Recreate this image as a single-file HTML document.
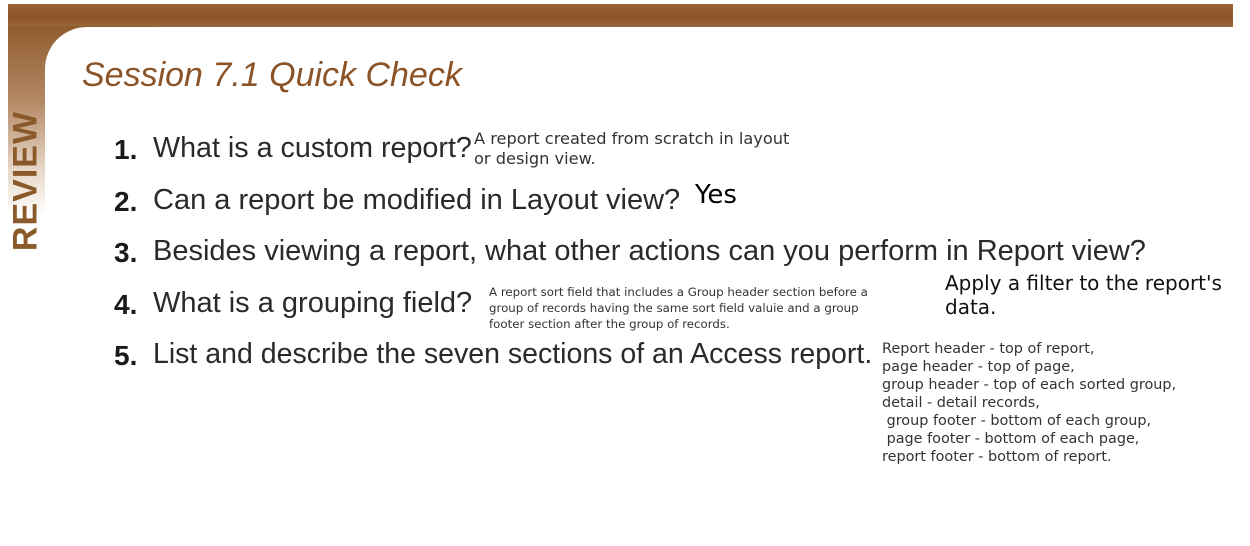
<!DOCTYPE html>
<html><head><meta charset="utf-8"><style>
html,body{margin:0;padding:0;background:#fff;}
body{width:1250px;height:546px;position:relative;overflow:hidden;font-family:"Liberation Sans",sans-serif;}
.band{position:absolute;left:8px;top:4px;width:1225px;height:23px;background:linear-gradient(#9a6434,#8a5428 60%,#9c6a3e);}
.side{position:absolute;left:8px;top:26px;width:150px;height:190px;background:linear-gradient(#915c2e,#b48a66 40%,#e6d6c6 75%,#fff);}
.corner{position:absolute;left:45px;top:27px;width:200px;height:200px;background:#fff;border-top-left-radius:42px;}
.review{position:absolute;left:26px;top:181px;transform:translate(-50%,-50%) rotate(-90deg);font-weight:bold;font-size:34px;color:#8b5a2b;letter-spacing:1px;white-space:nowrap;}
.title{position:absolute;left:82px;top:56px;font-style:italic;font-size:34px;color:#8b5428;white-space:nowrap;}
.n{position:absolute;left:114px;font-weight:bold;font-size:28px;color:#1a1a1a;}
.q{position:absolute;left:153px;font-size:29px;color:#2a2a2a;white-space:nowrap;}
.a{position:absolute;font-family:"DejaVu Sans",sans-serif;white-space:nowrap;}
</style></head><body>
<div class="band"></div>
<div class="side"></div>
<div class="corner"></div>
<div class="review">REVIEW</div>
<div class="title">Session 7.1 Quick Check</div>

<div class="n" style="top:134px">1.</div><div class="q" style="top:132px;font-size:28.7px">What is a custom report?</div>
<div class="n" style="top:186px">2.</div><div class="q" style="top:184px">Can a report be modified in Layout view?</div>
<div class="n" style="top:237px">3.</div><div class="q" style="top:235px">Besides viewing a report, what other actions can you perform in Report view?</div>
<div class="n" style="top:289px">4.</div><div class="q" style="top:287px">What is a grouping field?</div>
<div class="n" style="top:340px">5.</div><div class="q" style="top:338px;font-size:28.5px">List and describe the seven sections of an Access report.</div>

<div class="a" style="left:474px;top:129px;font-size:16.2px;line-height:20px;color:#333">A report created from scratch in layout<br>or design view.</div>
<div class="a" style="left:695px;top:180px;font-size:26px;color:#000">Yes</div>
<div class="a" style="left:945px;top:271px;font-size:20px;line-height:24px;color:#111">Apply a filter to the report's<br>data.</div>
<div class="a" style="left:489px;top:284px;font-size:11.8px;line-height:16px;color:#333">A report sort field that includes a Group header section before a<br>group of records having the same sort field valuie and a group<br>footer section after the group of records.</div>
<div class="a" style="left:882px;top:340px;font-size:14.4px;line-height:18px;color:#333;white-space:pre">Report header - top of report,
page header - top of page,
group header - top of each sorted group,
detail - detail records,
 group footer - bottom of each group,
 page footer - bottom of each page,
report footer - bottom of report.</div>
</body></html>
